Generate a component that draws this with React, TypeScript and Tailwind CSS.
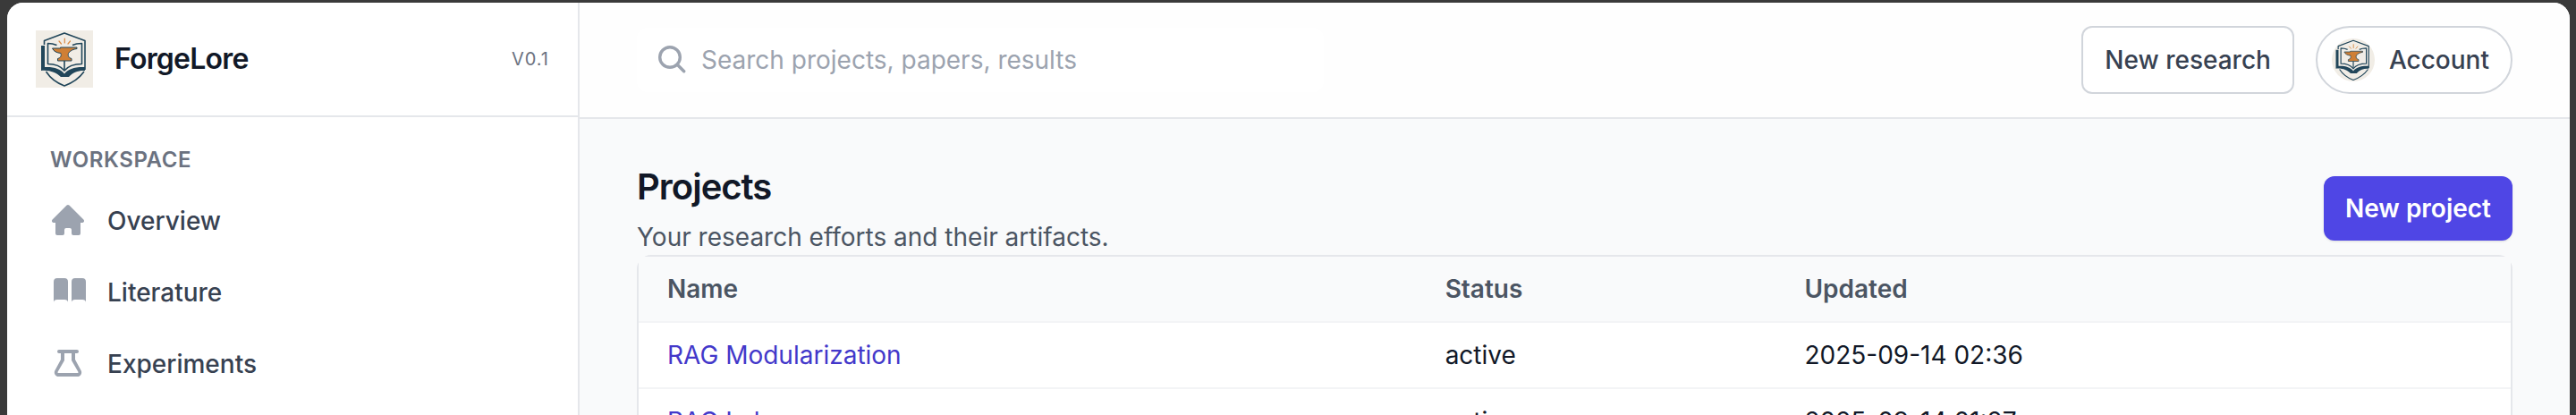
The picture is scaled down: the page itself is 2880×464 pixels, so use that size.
import type { ReactNode } from "react";

type Project = {
  id: number;
  name: string;
  status: string;
  updated: string;
};

const projects: Project[] = [
  { id: 1, name: "RAG Modularization", status: "active", updated: "2025-09-14 02:36" },
  { id: 2, name: "RAG Lab", status: "active", updated: "2025-09-14 01:27" },
];

const navItems: { label: string; icon: ReactNode }[] = [
  { label: "Overview", icon: <HomeIcon /> },
  { label: "Literature", icon: <BookIcon /> },
  { label: "Experiments", icon: <FlaskIcon /> },
];

export default function App() {
  return (
    <div className="h-screen overflow-hidden bg-[#3a3a3a] pt-[3px] pr-[7px] pl-2 font-['Inter',sans-serif] text-[28px] leading-10 text-[#111827]">
      <div className="flex h-full overflow-hidden rounded-t-[18px] bg-[#f9fafb]">
        <Sidebar />
        <div className="min-w-0 flex-1">
          <Topbar />
          <main className="px-16 pt-12">
            <div className="flex items-center justify-between">
              <div>
                <h1 className="text-[40px] leading-14 font-semibold tracking-tight">
                  Projects
                </h1>
                <p className="mt-2 text-[#4b5563]">
                  Your research efforts and their artifacts.
                </p>
              </div>
              <button
                type="button"
                className="rounded-xl bg-[#4f46e5] px-6 py-4 font-semibold text-white shadow-sm"
              >
                New project
              </button>
            </div>
            <ProjectTable projects={projects} />
          </main>
        </div>
      </div>
    </div>
  );
}

function Sidebar() {
  return (
    <aside className="w-[640px] shrink-0 border-r-2 border-[#e5e7eb] bg-white">
      <div className="flex h-32 items-center gap-6 border-b-2 border-[#e5e7eb] px-8">
        <Logo className="size-16" />
        <span className="text-[32px] font-semibold tracking-tight">ForgeLore</span>
        <span className="ml-auto text-[20px] tracking-wider text-[#6b7280] uppercase">
          v0.1
        </span>
      </div>
      <nav className="px-6 pt-6">
        <p className="px-6 py-2 text-[24px] leading-8 font-semibold tracking-wide text-[#6b7280] uppercase">
          Workspace
        </p>
        <ul className="mt-2 flex flex-col gap-2">
          {navItems.map((item) => (
            <li key={item.label}>
              <a
                href="#"
                className="flex items-center gap-6 px-6 py-4 font-medium text-[#374151]"
              >
                {item.icon}
                {item.label}
              </a>
            </li>
          ))}
        </ul>
      </nav>
    </aside>
  );
}

function Topbar() {
  return (
    <header className="flex h-[130px] items-center justify-between border-b-2 border-[#e5e7eb] bg-[#fefefe] px-16">
      <label className="flex h-18 w-[768px] items-center gap-3 rounded-xl bg-white pl-5">
        <SearchIcon />
        <input
          type="search"
          aria-label="Search"
          placeholder="Search projects, papers, results"
          className="min-w-0 flex-1 bg-transparent outline-none placeholder:text-[#9ca3af]"
        />
      </label>
      <div className="flex items-center gap-6">
        <button
          type="button"
          className="rounded-xl border-2 border-[#d1d5db] bg-white px-6 py-4 font-medium text-[#374151]"
        >
          New research
        </button>
        <button
          type="button"
          className="flex h-19 items-center gap-4 rounded-full border-2 border-[#d1d5db] bg-white pr-6 pl-4 font-medium text-[#374151]"
        >
          <Logo className="size-12 rounded-full" />
          Account
        </button>
      </div>
    </header>
  );
}

function ProjectTable({ projects }: { projects: Project[] }) {
  return (
    <div className="rounded-2xl border-2 border-[#e5e7eb] bg-white">
      <table className="w-full table-fixed text-left">
        <thead className="bg-[#f9fafb] text-[#4b5563]">
          <tr>
            <th className="w-[41.55%] px-8 py-4 font-semibold">Name</th>
            <th className="w-[19.2%] px-8 py-4 font-semibold">Status</th>
            <th className="px-8 py-4 font-semibold">Updated</th>
          </tr>
        </thead>
        <tbody>
          {projects.map((project) => (
            <tr key={project.id} className="border-t-2 border-[#f3f4f6]">
              <td className="px-8 py-4">
                <a href="#" className="text-[#4338ca]">
                  {project.name}
                </a>
              </td>
              <td className="px-8 py-4">{project.status}</td>
              <td className="px-8 py-4">{project.updated}</td>
            </tr>
          ))}
        </tbody>
      </table>
    </div>
  );
}

function SearchIcon() {
  return (
    <svg
      viewBox="0 0 40 40"
      className="size-10 shrink-0"
      fill="none"
      stroke="#9ca3af"
      strokeWidth="3.4"
      strokeLinecap="round"
    >
      <circle cx="17" cy="17" r="11.3" />
      <path d="M25.2 25.2L32.7 32.7" />
    </svg>
  );
}

function HomeIcon() {
  return (
    <svg viewBox="0 0 20 20" className="size-10 shrink-0" fill="#9ca3af">
      <path d="M10.707 1.293a1 1 0 00-1.414 0l-8 8A1 1 0 002 11h1v6a1 1 0 001 1h3a1 1 0 001-1v-2a1 1 0 011-1h2a1 1 0 011 1v2a1 1 0 001 1h3a1 1 0 001-1v-6h1a1 1 0 00.707-1.707l-8-8z" />
    </svg>
  );
}

function BookIcon() {
  return (
    <svg viewBox="0 0 20 20" className="size-10 shrink-0" fill="#9ca3af">
      <path d="M4 2h4a2 2 0 012 2v11.5c0-1-.8-1.500-2-1.500H4c-1.200 0-2 .5-2 1.500V4a2 2 0 012-2z" />
      <path d="M14 2h4a2 2 0 012 2v11.500c0-1-.8-1.500-2-1.500h-4c-1.200 0-2 .5-2 1.500V4a2 2 0 012-2z" />
    </svg>
  );
}

function FlaskIcon() {
  return (
    <svg viewBox="0 0 20 20" className="size-10 shrink-0" fill="#9ca3af">
      <path
        fillRule="evenodd"
        d="M5 2h10a1 1 0 110 2h-1v3.5l3.3 6.1A2.3 2.3 0 0115.3 17H4.7a2.3 2.3 0 01-2-3.4L6 7.5V4H5a1 1 0 010-2zm3 2v4L4.3 14.4a.4.4 0 00.4.6h10.6a.4.4 0 00.4-.6L12 8V4H8z"
      />
    </svg>
  );
}

// shield, open book and anvil
function Logo({ className }: { className: string }) {
  return (
    <svg viewBox="0 0 64 64" className={className} role="img" aria-label="ForgeLore logo">
      <rect width="64" height="64" fill="#f1ede6" />
      <g fill="none" stroke="#21465a" strokeWidth="1.6" strokeLinejoin="round">
        <path d="M9.5 16V11.5L32 3L55 11.5V44" />
        <path d="M11.5 46C16 53 24 59 32 62C40 59 49 53 54 46" />
        <path d="M23.5 16.500C20 15 17 14.500 13.500 14.500V37.500C22 37.500 28 40 32 45C36 40 43 37.500 51.500 37.500V14.500C48 14.500 44 15 41 16.500" />
        <path d="M32 34V45" />
      </g>
      <path
        fill="#21465a"
        d="M6 17H10V41C20 40.500 28 43 32 48.500C36 43 44 40.500 55 41V45C48 44.500 41 47 37 52H28C23 47 15 44 6 45Z"
      />
      <path
        d="M27.500 19H46V20.500C42 21 38.500 22.500 36.500 25.500C35.800 28.500 36.500 30.500 40 31.500V34H24.500V31.500C28 30.500 28.700 28.500 28 25.500C23.500 25 20 23.500 18.500 20H27.500Z"
        fill="#cf7f35"
        stroke="#21465a"
        strokeWidth="1"
        strokeLinejoin="round"
      />
      <g stroke="#d98a45" strokeWidth="1.2" strokeLinecap="round">
        <path d="M32.3 9V14" />
        <path d="M26 12L28.500 15" />
        <path d="M38.500 12L36 15" />
      </g>
    </svg>
  );
}
